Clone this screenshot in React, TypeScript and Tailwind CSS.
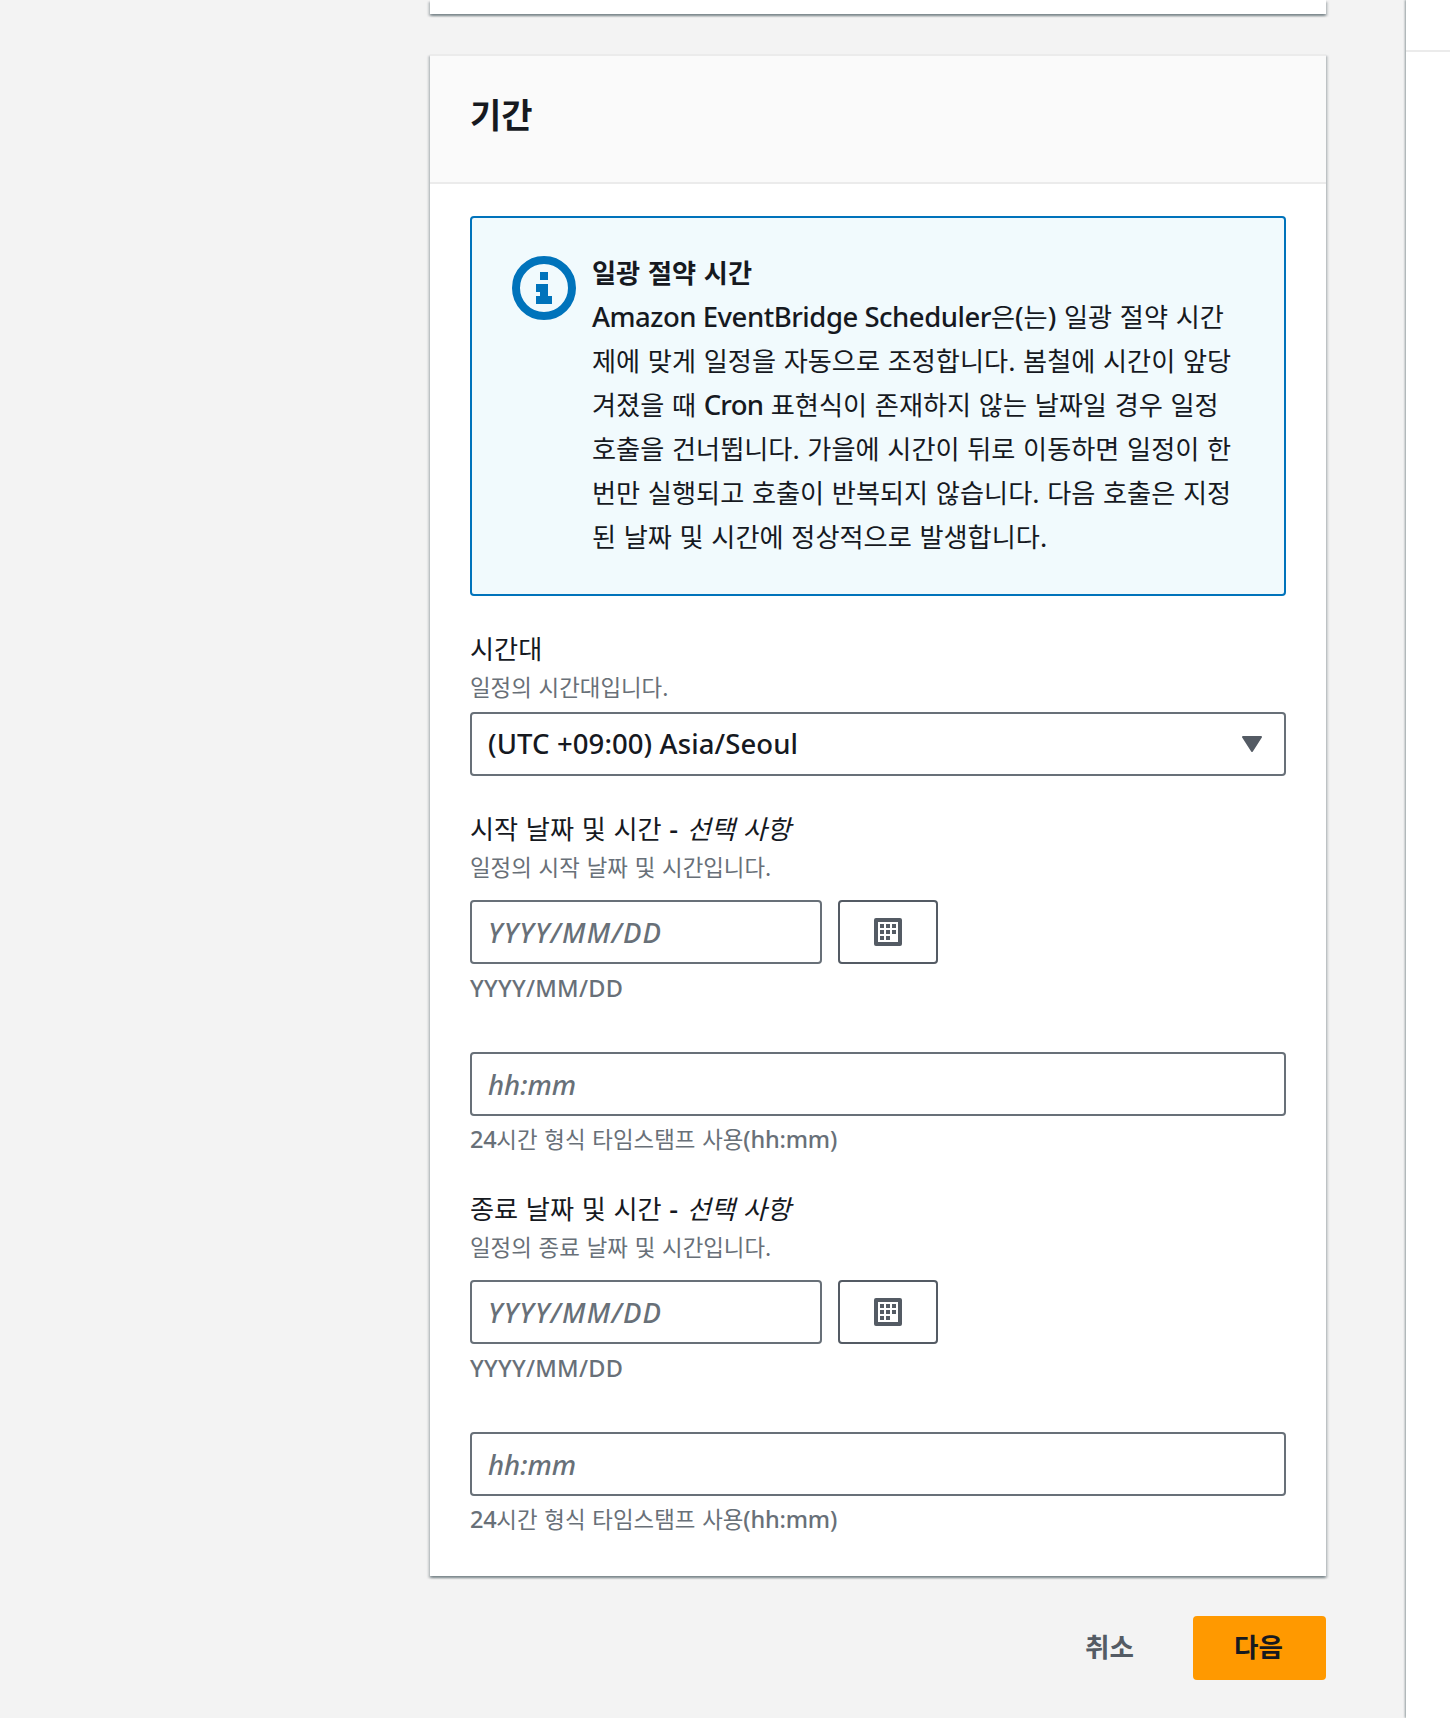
import type { ReactNode } from 'react';

const alertLines: ReactNode[] = [
  <><Latin className="tracking-[-0.48px]">Amazon EventBridge Scheduler</Latin>은<Latin>(</Latin>는<Latin>)</Latin> 일광 절약 시간</>,
  '제에 맞게 일정을 자동으로 조정합니다. 봄철에 시간이 앞당',
  <>겨졌을 때 <Latin className="tracking-[-0.8px]">Cron</Latin> 표현식이 존재하지 않는 날짜일 경우 일정</>,
  '호출을 건너뜁니다. 가을에 시간이 뒤로 이동하면 일정이 한',
  '번만 실행되고 호출이 반복되지 않습니다. 다음 호출은 지정',
  '된 날짜 및 시간에 정상적으로 발생합니다.',
];

export default function App() {
  return (
    <div className="flex h-[1718px] w-[1450px] overflow-hidden bg-[#f3f3f3] font-['Noto_Sans_CJK_KR','Noto_Sans',sans-serif] text-[26.2px] leading-[44px] [word-spacing:1.8px] text-[#16191f]">
      <main className="flex w-[1406px] shrink-0 flex-col pr-20 pl-[430px]">
        <section className="h-3.5 shrink-0 bg-white shadow-[0_2px_2px_0_rgba(0,28,36,0.3),2px_2px_2px_0_rgba(0,28,36,0.15),-2px_2px_2px_0_rgba(0,28,36,0.15)]" />

        <section className="mt-10 h-[1522px] shrink-0 border-t-2 border-[#ebebeb] bg-white shadow-[0_2px_2px_0_rgba(0,28,36,0.3),2px_2px_2px_0_rgba(0,28,36,0.15),-2px_2px_2px_0_rgba(0,28,36,0.15)]">
          <header className="flex h-32 items-center border-b-2 border-[#ebebeb] bg-[#fafafa] px-10 pb-2.5">
            <h2 className="text-[34px] font-bold">기간</h2>
          </header>

          <div className="flex flex-col px-10 pt-8">
            <DaylightAlert />

            <div className="mt-8">
              <FieldHeader label="시간대" description="일정의 시간대입니다." />
              <button className="mt-2 flex h-16 w-full items-center justify-between rounded-[4px] border-2 border-[#687078] bg-white pr-[22px] pl-4">
                <Latin className="tracking-[0.1px]">(UTC +09:00) Asia/Seoul</Latin>
                <svg width="20" height="16" viewBox="0 0 20 16" fill="#545b64" stroke="#545b64" strokeWidth="2" strokeLinejoin="round">
                  <path d="M1 1h18l-9 14z" />
                </svg>
              </button>
            </div>

            <DateTimeField label="시작 날짜 및 시간" description="일정의 시작 날짜 및 시간입니다." />
            <DateTimeField label="종료 날짜 및 시간" description="일정의 종료 날짜 및 시간입니다." />
          </div>
        </section>

        <footer className="mt-10 flex h-16 shrink-0 items-center justify-end text-[26.6px] font-bold">
          <button className="pr-[59px] pb-1 text-[#545b64]">취소</button>
          <button className="h-16 w-[133px] rounded-[4px] bg-[#ff9900] pr-0.5 pb-1">다음</button>
        </footer>
      </main>

      {/* Help panel */}
      <aside className="flex-1 bg-white shadow-[-1px_0_2px_0_rgba(0,28,36,0.4)]">
        <div className="h-[52px] border-b-2 border-[#ebebeb]" />
      </aside>
    </div>
  );
}

function Latin({ children, className = '' }: { children: ReactNode; className?: string }) {
  return (
    <span className={`font-['Noto_Sans',sans-serif] text-[1.05em] leading-none font-medium [word-spacing:0px] ${className}`}>
      {children}
    </span>
  );
}

function DaylightAlert() {
  return (
    <div className="flex h-[380px] rounded-[4px] border-2 border-[#0073bb] bg-[#f1fafd] pl-10">
      <svg className="mt-[38px] shrink-0" width="64" height="64" viewBox="0 0 64 64" fill="#0073bb">
        <circle cx="32" cy="32" r="28" fill="none" stroke="#0073bb" strokeWidth="8" />
        <path d="M28 16h8v8h-8zM24 28h12v12h4v8H24v-8h4v-4h-4z" />
      </svg>
      <div className="ml-4 pt-8 whitespace-nowrap">
        <h3 className="h-11 font-bold">일광 절약 시간</h3>
        {alertLines.map((line, i) => (
          <p key={i} className="h-11">{line}</p>
        ))}
      </div>
    </div>
  );
}

function FieldHeader({ label, optional, description }: { label: string; optional?: boolean; description: string }) {
  return (
    <>
      <div className="h-10 leading-[40px]">
        {label}
        {optional && <> <Latin className="mr-px">-</Latin> <i>선택 사항</i></>}
      </div>
      <div className="h-9 text-[22.4px] leading-[36px] text-[#687078]">{description}</div>
    </>
  );
}

function DateTimeField({ label, description }: { label: string; description: string }) {
  return (
    <div className="mt-8">
      <FieldHeader label={label} description={description} optional />
      <div className="mt-4 flex gap-4">
        <Input placeholder="YYYY/MM/DD" className="w-[352px] tracking-[1.2px]" />
        <button className="flex h-16 w-[100px] items-center justify-center rounded-[4px] border-2 border-[#545b64] bg-white">
          <CalendarIcon />
        </button>
      </div>
      <div className="mt-[5px] h-9 text-[22.4px] leading-[36px] text-[#687078]">
        <Latin className="tracking-[0.25px]">YYYY/MM/DD</Latin>
      </div>
      <Input placeholder="hh:mm" className="mt-[47px] w-full" />
      <div className="mt-1 h-9 text-[22.4px] leading-[36px] text-[#687078]">
        <Latin className="tracking-[-0.3px]">24</Latin>시간 형식 타임스탬프 사용<Latin className="tracking-[-0.2px]">(hh:mm)</Latin>
      </div>
    </div>
  );
}

function Input({ placeholder, className }: { placeholder: string; className: string }) {
  return (
    <input
      placeholder={placeholder}
      className={`block h-16 rounded-[4px] border-2 border-[#687078] bg-white px-4 font-['Noto_Sans',sans-serif] text-[27.5px] font-medium placeholder:text-[#687078] placeholder:italic ${className}`}
    />
  );
}

function CalendarIcon() {
  return (
    <svg width="28" height="28" viewBox="0 0 28 28" fill="#545b64">
      <path fillRule="evenodd" d="M2 0h24a2 2 0 0 1 2 2v24a2 2 0 0 1-2 2H2a2 2 0 0 1-2-2V2a2 2 0 0 1 2-2zM4 4v20h20V4z" />
      <path d="M6 6h4v4H6zM12 6h4v4h-4zM18 6h4v4h-4zM6 12h4v4H6zM12 12h4v4h-4zM18 12h4v4h-4zM6 18h4v4H6zM12 18h4v4h-4z" />
    </svg>
  );
}
